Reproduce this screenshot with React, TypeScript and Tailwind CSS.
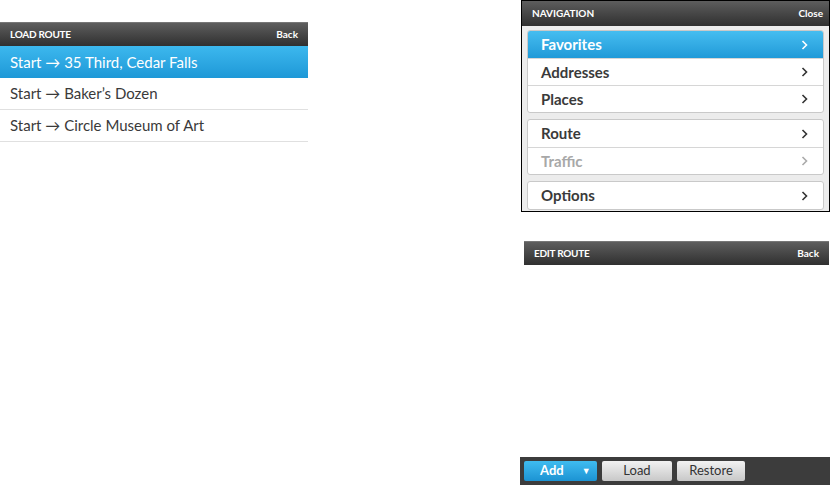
import React from "react";

const font = { fontFamily: "Lato, 'Open Sans', sans-serif" };

const Header = ({ title, action }: { title: string; action: string }) => (
  <div className="flex h-[24px] items-center justify-between bg-gradient-to-b from-[#5e5e5e] to-[#303030] px-[10px] text-white border-t border-[#777]">
    <span className="text-[10px] font-bold tracking-tight">{title}</span>
    <span className="text-[10px] font-bold">{action}</span>
  </div>
);

const Chevron = ({ color }: { color: string }) => (
  <svg width="7" height="10" viewBox="0 0 7 10" className="shrink-0">
    <path d="M1.5 1 L5.5 5 L1.5 9" fill="none" stroke={color} strokeWidth="1.6" />
  </svg>
);

type NavItem = { label: string; active?: boolean; disabled?: boolean };

const NavGroup = ({ items }: { items: NavItem[] }) => (
  <div className="overflow-hidden rounded-[3px] border border-[#c9c9c9] bg-white">
    {items.map((it, i) => (
      <div
        key={it.label}
        className={
          "flex h-[27px] items-center justify-between pl-[13px] pr-[15px] text-[15px] font-bold " +
          (i > 0 ? "border-t border-[#d6d6d6] " : "") +
          (it.active
            ? "bg-gradient-to-b from-[#45bdf0] to-[#1f9ad8] text-white"
            : it.disabled
            ? "text-[#a8a8a8]"
            : "text-[#3a3a3a]")
        }
      >
        <span>{it.label}</span>
        <Chevron color={it.active ? "#fff" : it.disabled ? "#aaa" : "#333"} />
      </div>
    ))}
  </div>
);

const routes = [
  "Start → 35 Third, Cedar Falls",
  "Start → Baker’s Dozen",
  "Start → Circle Museum of Art",
];

export default function App() {
  return (
    <div className="flex h-[485px] w-[830px] bg-white" style={font}>
      <div className="mt-[22px] w-[308px]">
        <Header title="LOAD ROUTE" action="Back" />
        {routes.map((r, i) => (
          <div
            key={r}
            className={
              "flex h-[32px] items-center pl-[10px] text-[15px] " +
              (i === 0
                ? "bg-gradient-to-b from-[#3cb8ee] to-[#1d98d7] text-white"
                : "border-b border-[#e0e0e0] text-[#3a3a3a]")
            }
          >
            {r}
          </div>
        ))}
      </div>

      <div className="ml-[212px] flex w-[310px] flex-col">
        <div className="ml-[1px] h-[212px] border border-black bg-[#ececec]">
          <div className="flex h-[25px] items-center justify-between bg-gradient-to-b from-[#5e5e5e] to-[#303030] pl-[10px] pr-[6px] text-white">
            <span className="text-[10px] font-bold">NAVIGATION</span>
            <span className="text-[10px] font-bold">Close</span>
          </div>
          <div className="flex flex-col gap-[6px] px-[5px] pt-[4px]">
            <NavGroup items={[{ label: "Favorites", active: true }, { label: "Addresses" }, { label: "Places" }]} />
            <NavGroup items={[{ label: "Route" }, { label: "Traffic", disabled: true }]} />
            <NavGroup items={[{ label: "Options" }]} />
          </div>
        </div>

        <div className="mt-[29px] ml-[4px] w-[305px]">
          <Header title="EDIT ROUTE" action="Back" />
        </div>

        <div className="flex-1" />

        <div className="flex h-[28px] items-center gap-[5px] bg-[#3c3c3c] px-[4px]">
          <div className="flex h-[20px] w-[73px] items-center rounded-[2px] bg-gradient-to-b from-[#3fbcf0] to-[#1b93d3] pl-[16px] text-[13px] font-bold text-white">
            <span>Add</span>
            <span className="ml-[18px] text-[9px]">▼</span>
          </div>
          <div className="flex h-[20px] w-[70px] items-center justify-center rounded-[2px] bg-gradient-to-b from-[#f2f2f2] to-[#c8c8c8] text-[13px] text-[#333]">
            Load
          </div>
          <div className="flex h-[20px] w-[68px] items-center justify-center rounded-[2px] bg-gradient-to-b from-[#f2f2f2] to-[#c8c8c8] text-[13px] text-[#333]">
            Restore
          </div>
        </div>
      </div>
    </div>
  );
}
